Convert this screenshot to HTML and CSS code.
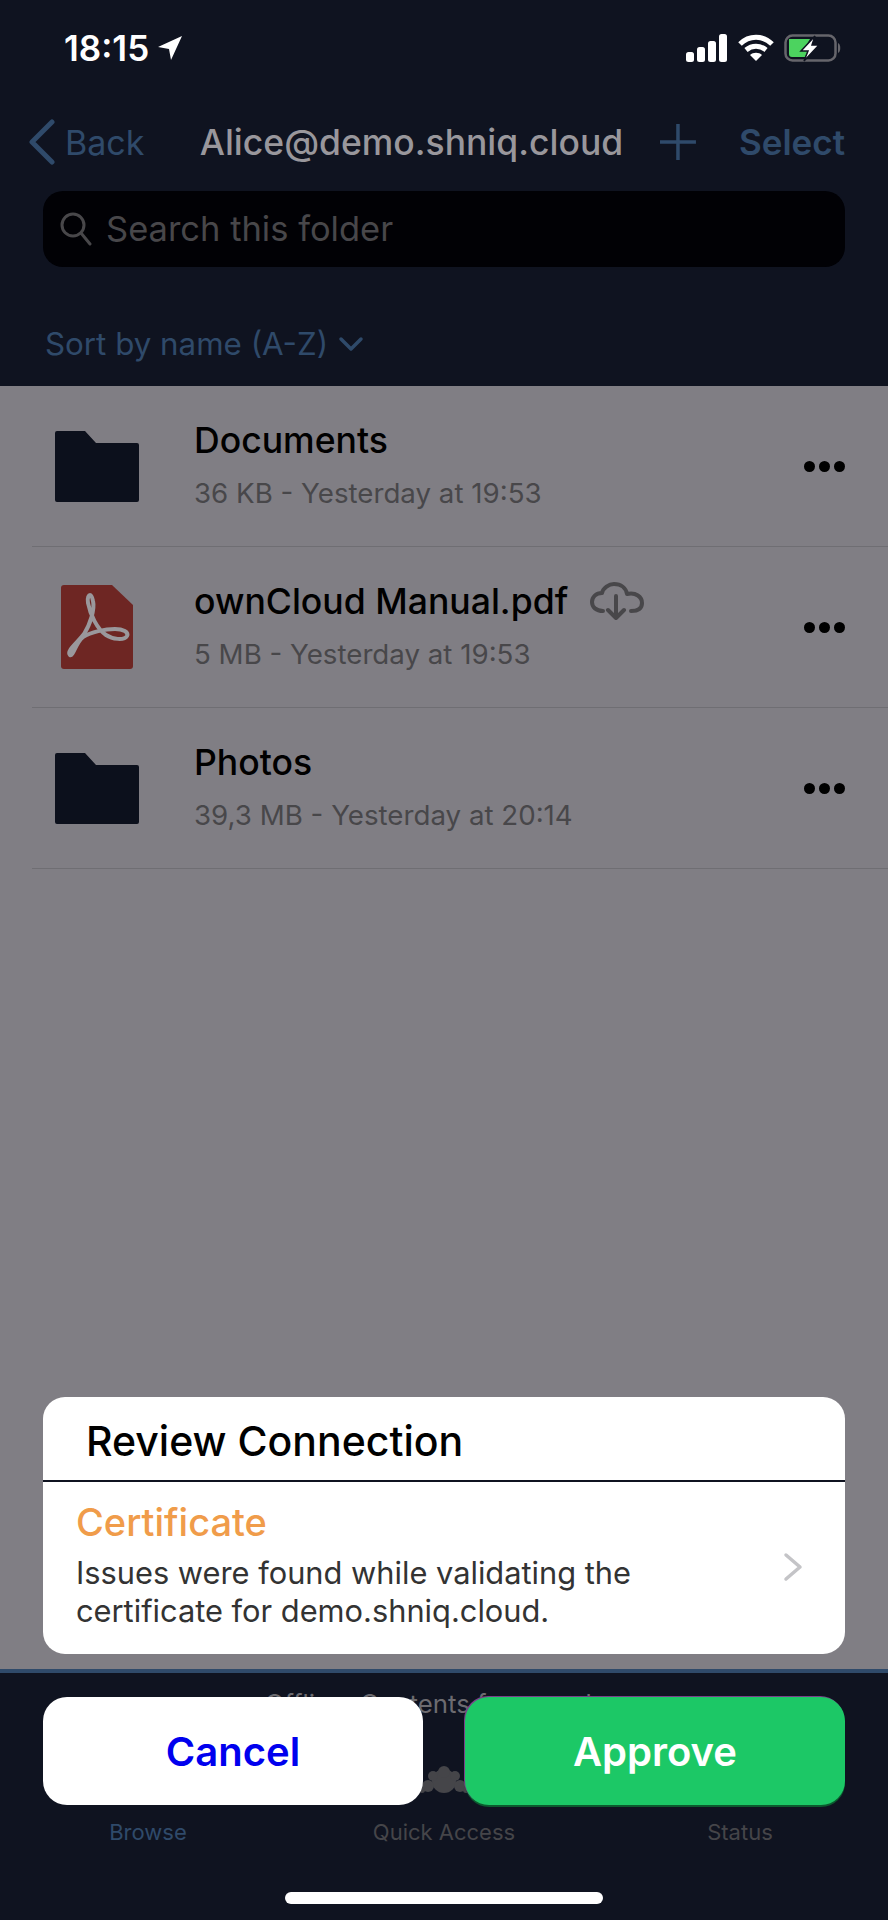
FILE: index.html
```html
<!DOCTYPE html>
<html lang="en">

<head>
    <meta charset="utf-8">
    <meta name="viewport" content="width=device-width, initial-scale=1.0">
    <title>Review Connection</title>
    <link rel="stylesheet" href="styles.css">
</head>

<body>
    <div id="app">
        <header id="top">
            <div id="status">
                <div class="clock">
                    <span>18:15</span>
                    <svg width="26" height="26" viewBox="0 0 26 26"><path d="M25 1 1 12l11 2 2 11z" fill="#fff"/></svg>
                </div>
                <div class="indicators">
                    <svg width="42" height="28" viewBox="0 0 42 28" fill="#fff">
                        <rect x="0" y="18" width="8" height="10" rx="2.5"/>
                        <rect x="11" y="13" width="8" height="15" rx="2.5"/>
                        <rect x="22" y="7" width="8" height="21" rx="2.5"/>
                        <rect x="33" y="0" width="8" height="28" rx="2.5"/>
                    </svg>
                    <svg width="36" height="28" viewBox="0 0 36 28" fill="none" stroke="#fff" stroke-width="5">
                        <path d="M2 10C11 1 25 1 34 10"/>
                        <path d="M8 16c6-5 14-5 20 0"/>
                        <path d="M18 27l-6-6c3-3 9-3 12 0z" fill="#fff" stroke="none"/>
                    </svg>
                    <svg width="58" height="28" viewBox="0 0 58 28">
                        <rect x="1.5" y="1.5" width="50" height="25" rx="7" fill="none" stroke="#66656b" stroke-width="2.5"/>
                        <path d="M54 9c3 1 3 9 0 10z" fill="#66656b"/>
                        <path d="M5 5h21l-7 12h5l-3 6H8a3 3 0 0 1-3-3z" fill="#4cd35f"/>
                        <path d="M31 2 17 17h7l-4 10 15-16h-7z" fill="#fff" stroke="#0f1320" stroke-width="1.5"/>
                    </svg>
                </div>
            </div>

            <nav id="bar">
                <div class="back">
                    <svg width="28" height="46" viewBox="0 0 28 46" fill="none" stroke="#2f4a6a" stroke-width="5" stroke-linecap="round" stroke-linejoin="round"><path d="M24 3 4 23l20 20"/></svg>
                    <span>Back</span>
                </div>
                <h1>Alice@demo.shniq.cloud</h1>
                <svg class="plus" width="38" height="38" viewBox="0 0 38 38" stroke="#2f4a6a" stroke-width="3.5"><path d="M19 1v36M1 19h36"/></svg>
                <span class="select">Select</span>
            </nav>

            <div id="search">
                <svg width="32" height="34" viewBox="0 0 32 34" fill="none" stroke="#48474a" stroke-width="3" stroke-linecap="round"><circle cx="13" cy="13" r="11"/><path d="M21 21l9 11"/></svg>
                <span>Search this folder</span>
            </div>

            <div id="sort">
                <span>Sort by name (A-Z)</span>
                <svg width="26" height="16" viewBox="0 0 26 16" fill="none" stroke="#2f4a6a" stroke-width="3.5" stroke-linecap="round" stroke-linejoin="round"><path d="M3 3l10 10L23 3"/></svg>
            </div>
        </header>

        <main id="list">
            <article class="row">
                <div class="icon">
                    <svg width="84" height="71" viewBox="0 0 84 71"><path d="M2 0h28l11 12h41a2 2 0 0 1 2 2v55a2 2 0 0 1-2 2H2a2 2 0 0 1-2-2V2a2 2 0 0 1 2-2z" fill="#0c101c"/></svg>
                </div>
                <div class="info">
                    <h2>Documents</h2>
                    <p>36 KB - Yesterday at 19:53</p>
                </div>
                <div class="dots"><i></i><i></i><i></i></div>
            </article>

            <article class="row">
                <div class="icon">
                    <svg width="72" height="84" viewBox="0 0 72 84">
                        <path d="M3 0h48l21 20v61a3 3 0 0 1-3 3H3a3 3 0 0 1-3-3V3a3 3 0 0 1 3-3z" fill="#6e2623"/>
                        <path d="M9 70c-4-4 8-13 14-21 6-9 11-25 9-33-1-5-2-6-3-6s-3 2-2 8c2 11 9 26 18 32 6 4 18 6 21 1 2-4-4-7-12-7-10 0-24 3-32 8-7 5-10 20-13 18z" fill="none" stroke="#9a989c" stroke-width="4"/>
                    </svg>
                </div>
                <div class="info">
                    <h2>ownCloud Manual.pdf
                        <svg class="cloud" width="54" height="38" viewBox="0 0 54 38" fill="none" stroke="#48474a" stroke-width="4" stroke-linecap="round" stroke-linejoin="round">
                            <path d="M13 29C6 29 2 25 2 20s4-9 10-9c1-5 7-9 12-9 7 0 12 4 13 10 9-2 15 3 15 9s-5 8-11 8"/>
                            <path d="M26 14v21M18 28l8 8 8-8"/>
                        </svg>
                    </h2>
                    <p>5 MB - Yesterday at 19:53</p>
                </div>
                <div class="dots"><i></i><i></i><i></i></div>
            </article>

            <article class="row">
                <div class="icon">
                    <svg width="84" height="71" viewBox="0 0 84 71"><path d="M2 0h28l11 12h41a2 2 0 0 1 2 2v55a2 2 0 0 1-2 2H2a2 2 0 0 1-2-2V2a2 2 0 0 1 2-2z" fill="#0c101c"/></svg>
                </div>
                <div class="info">
                    <h2>Photos</h2>
                    <p>39,3 MB - Yesterday at 20:14</p>
                </div>
                <div class="dots"><i></i><i></i><i></i></div>
            </article>
        </main>

        <footer id="tabs">
            <p class="offline">Offline. Contents from cache.</p>
            <svg class="logo" width="50" height="28" viewBox="0 0 50 28" fill="#454549">
                <circle cx="25" cy="15" r="12"/><circle cx="25" cy="6" r="6"/><circle cx="14" cy="10" r="5"/><circle cx="36" cy="10" r="5"/>
                <circle cx="9" cy="20" r="6"/><circle cx="41" cy="20" r="6"/><circle cx="3" cy="24" r="3"/><circle cx="47" cy="24" r="3"/>
            </svg>
            <div class="labels">
                <span class="active">Browse</span>
                <span>Quick Access</span>
                <span>Status</span>
            </div>
            <div class="home"></div>
        </footer>
    </div>

    <section id="sheet">
        <div class="card">
            <h3>Review Connection</h3>
            <div class="issue">
                <div>
                    <h4>Certificate</h4>
                    <p>Issues were found while validating the certificate for demo.shniq.cloud.</p>
                </div>
                <svg width="20" height="30" viewBox="0 0 20 30" fill="none" stroke="#c4c4c7" stroke-width="3.5" stroke-linecap="round" stroke-linejoin="round"><path d="M3 3l14 12L3 27"/></svg>
            </div>
        </div>
        <div class="buttons">
            <button class="cancel">Cancel</button>
            <button class="approve">Approve</button>
        </div>
    </section>
</body>

</html>
```

FILE: styles.css
```css
body {
    margin: 0;
    padding: 0;
    font-family: Inter, "Liberation Sans", sans-serif;
    background-color: #807e84;
    overflow: hidden;
}

h1, h2, h3, h4, p {
    margin: 0;
    font-weight: 400;
}

#app {
    height: 1920px;
    display: flex;
    flex-direction: column;
}

/**************** Top **************/

#top {
    height: 386px;
    background-color: #0f1320;
    flex-shrink: 0;
}

#status {
    height: 96px;
    display: flex;
    align-items: center;
    justify-content: space-between;
    padding: 0 46px 0 64px;
}

.clock {
    display: flex;
    align-items: center;
    gap: 8px;
    color: white;
    font-size: 35px;
    font-weight: 600;
}

.indicators {
    display: flex;
    align-items: center;
    gap: 10px;
}

#bar {
    height: 92px;
    display: flex;
    align-items: center;
    padding: 0 43px 0 28px;
    color: #2f4a6a;
    font-size: 34px;
}

.back {
    display: flex;
    align-items: center;
    gap: 9px;
    width: 172px;
}

#bar h1 {
    width: 460px;
    font-size: 35.5px;
    font-weight: 500;
    color: #99979c;
    white-space: nowrap;
}

.plus {
    margin-right: 42px;
}

.select {
    font-weight: 600;
    font-size: 35px;
}

#search {
    height: 76px;
    margin: 3px 43px 0;
    background-color: #010105;
    border-radius: 20px;
    display: flex;
    align-items: center;
    gap: 14px;
    padding-left: 17px;
    color: #48474a;
    font-size: 34.5px;
}

#search span {
    margin-bottom: 2px;
}

#sort {
    display: flex;
    align-items: center;
    gap: 10px;
    margin: 58px 0 0 45px;
    color: #2f4a6a;
    font-size: 31.3px;
}

/**************** Liste **************/

#list {
    flex: 1;
    padding-left: 32px;
}

.row {
    height: 160px;
    border-bottom: 1px solid #6f6e73;
    display: flex;
    align-items: center;
    padding-right: 43px;
}

.icon {
    width: 130px;
    display: flex;
    justify-content: center;
    flex-shrink: 0;
}

.info {
    flex: 1;
    display: flex;
    flex-direction: column;
    gap: 16px;
    margin-left: 32px;
    padding-bottom: 2px;
}

.info h2 {
    font-size: 35.6px;
    font-weight: 500;
    color: black;
    display: flex;
    align-items: center;
    gap: 22px;
    height: 40px;
}

.info p {
    font-size: 27.7px;
    color: #48474a;
}

.dots {
    display: flex;
    gap: 4px;
}

.dots i {
    width: 11px;
    height: 11px;
    border-radius: 50%;
    background-color: black;
}

/**************** Tabs **************/

#tabs {
    height: 251px;
    flex-shrink: 0;
    box-sizing: border-box;
    border-top: 4px solid #2f4a6a;
    background-color: #0f1320;
    display: flex;
    flex-direction: column;
    align-items: center;
    position: relative;
}

.offline {
    height: 30px;
    line-height: 30px;
    margin-top: 16px;
    font-size: 25.8px;
    color: #6c6b70;
    white-space: nowrap;
}

.logo {
    margin-top: 47px;
}

.labels {
    width: 100%;
    display: grid;
    grid-template-columns: 1fr 1fr 1fr;
    text-align: center;
    margin-top: 25px;
    font-size: 22px;
    color: #454549;
}

.labels .active {
    color: #2f4a6a;
}

.home {
    position: absolute;
    left: 285px;
    bottom: 16px;
    width: 318px;
    height: 12px;
    border-radius: 6px;
    background-color: white;
}

/**************** Popup **************/

#sheet {
    position: absolute;
    left: 43px;
    right: 43px;
    top: 1397px;
    display: flex;
    flex-direction: column;
    gap: 43px;
}

.card {
    height: 257px;
    background-color: white;
    border-radius: 22px;
    overflow: hidden;
}

.card h3 {
    height: 85px;
    box-sizing: border-box;
    border-bottom: 2px solid #0f1320;
    padding: 19px 0 0 43px;
    font-size: 41px;
    font-weight: 500;
    color: black;
}

.issue {
    display: flex;
    align-items: center;
    justify-content: space-between;
    padding: 17px 42px 0 33px;
}

.issue h4 {
    font-size: 38px;
    font-weight: 500;
    color: #f09c4a;
    margin-bottom: 9px;
}

.issue p {
    width: 640px;
    font-size: 30.8px;
    line-height: 38px;
    color: #333;
}

.issue svg {
    margin-top: 5px;
}

.buttons {
    display: flex;
    justify-content: space-between;
}

.buttons button {
    width: 380px;
    height: 108px;
    border: 0;
    border-radius: 24px;
    font-family: inherit;
    font-size: 40px;
    font-weight: 600;
}

.cancel {
    background-color: white;
    color: #0000ee;
}

.approve {
    background-color: #1cc866;
    color: white;
    box-shadow: -1px -1px 0 #7a3f8a, 0 2px 0 #0b5b2e;
}
```
